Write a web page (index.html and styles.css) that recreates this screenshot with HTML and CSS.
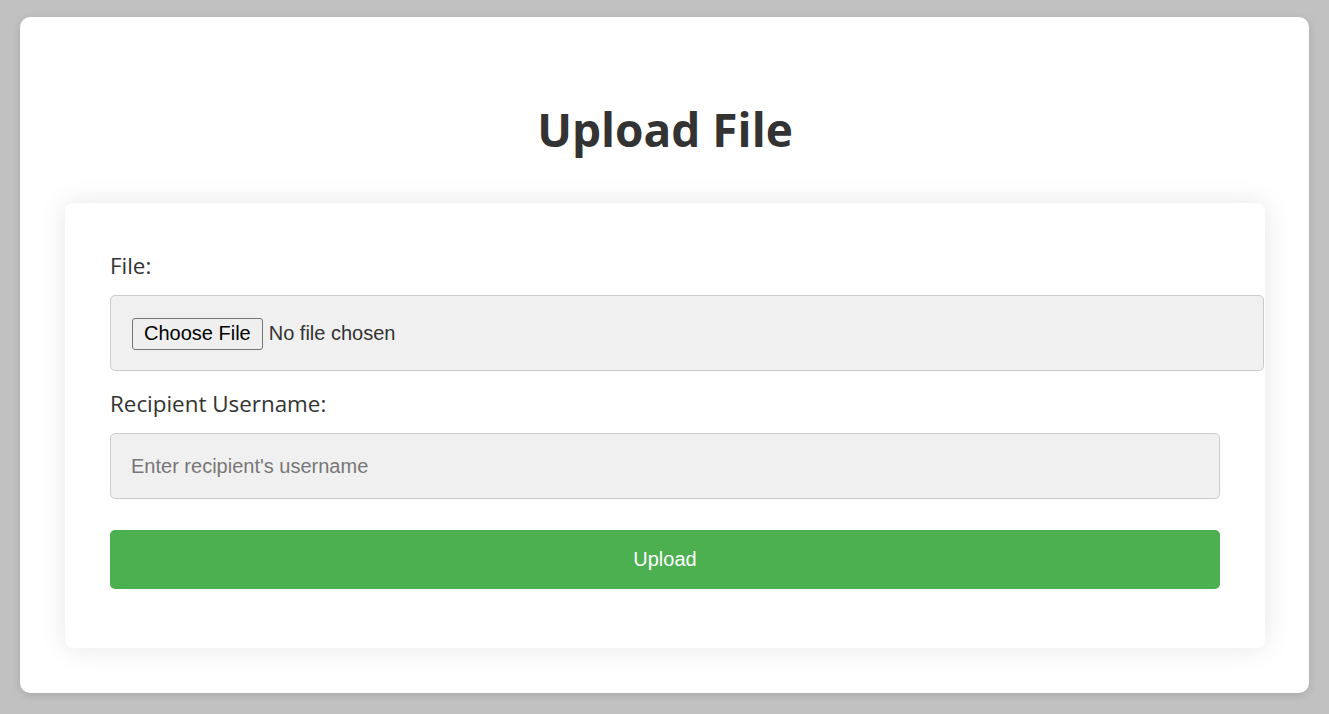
FILE: index.html
```html
<!DOCTYPE html>
<html lang="en">
<head>
<meta charset="utf-8">
<title>Upload File</title>
<link rel="stylesheet" href="styles.css">
</head>
<body>
<main class="container">
  <h1 class="title">Upload File</h1>
  <form class="card">
    <label class="label" for="file">File:</label>
    <input class="file-input" type="file" id="file">
    <label class="label label-second" for="recipient">Recipient Username:</label>
    <input class="text-input" type="text" id="recipient" placeholder="Enter recipient's username">
    <button class="submit" type="button">Upload</button>
  </form>
</main>
</body>
</html>
```

FILE: styles.css
```css
html, body {
  margin: 0;
  height: 100%;
}
body {
  background: #c1c1c1;
  padding: 17px 20px 21px;
  box-sizing: border-box;
  font-family: "Open Sans", "Noto Sans", sans-serif;
  color: #333;
}
.container {
  background: #fff;
  border-radius: 10px;
  box-shadow: 0 2px 8px rgba(0, 0, 0, 0.12);
  height: 100%;
  box-sizing: border-box;
  padding: 0 44px 0 45px;
  display: flex;
  flex-direction: column;
  align-items: stretch;
}
.title {
  margin: 84px 0 0;
  font-size: 46px;
  line-height: 56px;
  font-weight: 700;
  text-align: center;
  color: #333;
}
.card {
  margin-top: 46px;
  background: #fff;
  border-radius: 8px;
  box-shadow: 0 0 28px rgba(0, 0, 0, 0.1);
  padding: 50px 45px 59px;
  display: flex;
  flex-direction: column;
  align-items: flex-start;
}
.label {
  font-size: 22.4px;
  line-height: 26px;
  color: #333;
}
.label-second {
  margin-top: 20px;
}
.file-input {
  margin: 16px 0 0;
  width: calc(100% + 44px);
  box-sizing: border-box;
  height: 76px;
  padding: 21px 20px 21px 21px;
  background: #f0f0f0;
  border: 1px solid #ccc;
  border-radius: 5px;
  font-family: "Liberation Sans", Arial, sans-serif;
  font-size: 20px;
  line-height: 32px;
  color: #333;
}
.file-input::file-selector-button {
  font-family: "Liberation Sans", Arial, sans-serif;
  font-size: 20px;
  color: #000;
  height: 32px;
  padding: 0 11px;
  margin: 0 6px 0 0;
  background: #efefef;
  border: 1px solid #767676;
  border-radius: 3px;
}
.text-input {
  margin: 16px 0 0;
  width: 100%;
  box-sizing: border-box;
  height: 66px;
  padding: 0 20px;
  background: #f0f0f0;
  border: 1px solid #ccc;
  border-radius: 5px;
  font-family: "Liberation Sans", Arial, sans-serif;
  font-size: 20px;
  color: #333;
}
.text-input::placeholder {
  color: #777;
}
.submit {
  margin-top: 31px;
  width: 100%;
  height: 59px;
  background: #4caf50;
  color: #fff;
  border: 0;
  border-radius: 5px;
  font-family: "Liberation Sans", Arial, sans-serif;
  font-size: 20px;
}
```
